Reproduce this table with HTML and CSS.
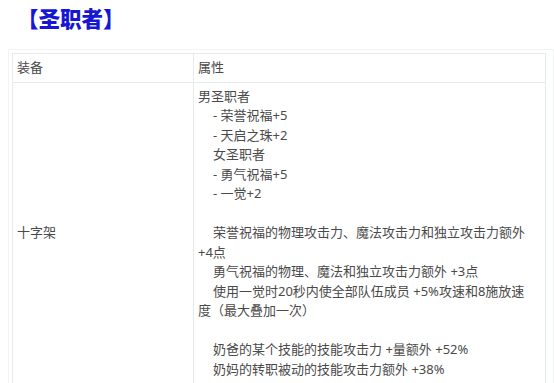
FILE: index.html
```html
<!DOCTYPE html>
<html lang="zh">
<head>
<meta charset="utf-8">
<link rel="stylesheet" href="styles.css">
</head>
<body>
<h2 class="title">【圣职者】</h2>
<div class="wrap">
  <table class="equip">
    <thead>
      <tr><th class="c1">装备</th><th class="c2">属性</th></tr>
    </thead>
    <tbody>
      <tr>
        <td class="c1">十字架</td>
        <td class="c2">
          <div class="ln">男圣职者</div>
          <div class="ln ind">- 荣誉祝福+5</div>
          <div class="ln ind">- 天启之珠+2</div>
          <div class="ln ind">女圣职者</div>
          <div class="ln ind">- 勇气祝福+5</div>
          <div class="ln ind">- 一觉+2</div>
          <div class="ln">&nbsp;</div>
          <div class="ln ind">荣誉祝福的物理攻击力、魔法攻击力和独立攻击力额外<br>+4点</div>
          <div class="ln ind">勇气祝福的物理、魔法和独立攻击力额外 +3点</div>
          <div class="ln ind">使用一觉时20秒内使全部队伍成员 +5%攻速和8施放速<br>度（最大叠加一次）</div>
          <div class="ln">&nbsp;</div>
          <div class="ln ind">奶爸的某个技能的技能攻击力 +量额外 +52%</div>
          <div class="ln ind">奶妈的转职被动的技能攻击力额外 +38%</div>
        </td>
      </tr>
    </tbody>
  </table>
</div>
</body>
</html>
```
FILE: styles.css
```css
html, body {
  margin: 0;
  padding: 0;
  background: #ffffff;
}
body {
  font-family: "Noto Sans", "Noto Sans CJK SC", sans-serif;
  color: #4a4a4a;
  font-size: 13px;
  line-height: 19.5px;
}
.title {
  margin: 3px 0 0 17px;
  height: 30px;
  font-size: 21.5px;
  line-height: 30px;
  font-weight: 900;
  color: #1616d4;
  font-family: "Noto Sans CJK SC", sans-serif;
}
.wrap {
  margin: 16px 0 0 8px;
  border: 1px solid #f2f3f4;
  border-bottom: none;
  padding: 3px 7px 0 3px;
}
.equip {
  width: 100%;
  border-collapse: collapse;
  table-layout: fixed;
}
.equip th,
.equip td {
  border: 1px solid #e6eaed;
  padding: 4px 4px;
  text-align: left;
  font-weight: normal;
  vertical-align: middle;
}
.equip .c1 {
  width: 172px;
}
.ln {
  white-space: normal;
}
.ind {
  text-indent: 15px;
}
```
